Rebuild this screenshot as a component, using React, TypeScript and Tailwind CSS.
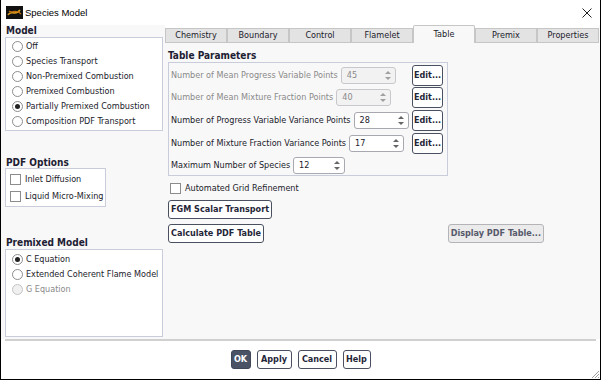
import React from 'react';

const font = "font-['DejaVu_Sans_Condensed','Liberation_Sans',sans-serif]";

const Radio = ({ label, checked, disabled }: { label: string; checked?: boolean; disabled?: boolean }) => (
  <div className="flex h-[15px] items-center">
    <span
      className={`ml-[6px] flex h-[11px] w-[11px] items-center justify-center rounded-full border ${
        disabled ? 'border-[#c4c4c4] bg-[#f0f0f0]' : 'border-[#8c8c8c] bg-white'
      }`}
    >
      {checked && <span className="h-[5px] w-[5px] rounded-full bg-[#222]" />}
    </span>
    <span className={`ml-[3px] ${disabled ? 'text-[#8a8a8a]' : 'text-[#1b1b2b]'}`}>{label}</span>
  </div>
);

const Check = ({ label }: { label: string }) => (
  <div className="flex h-[17px] items-center">
    <span className="ml-[4px] h-[11px] w-[11px] border border-[#8c8c8c] bg-white" />
    <span className="ml-[4px] text-[#1b1b2b]">{label}</span>
  </div>
);

const Spinner = ({ value, w, disabled }: { value: string; w: string; disabled?: boolean }) => (
  <div
    className={`ml-[3px] flex h-[17px] ${w} items-center justify-between rounded-[3px] border pl-[5px] pr-[4px] ${
      disabled ? 'border-[#c8c8cc] bg-[#f2f2f2] text-[#8a8a8a]' : 'border-[#a8a8b0] bg-white text-[#1b1b2b]'
    }`}
  >
    <span>{value}</span>
    <svg width="6" height="11" viewBox="0 0 6 11">
      <path d="M0 4 L3 1 L6 4 Z" fill={disabled ? '#a0a0a0' : '#666'} />
      <path d="M0 7 L3 10 L6 7 Z" fill={disabled ? '#a0a0a0' : '#666'} />
    </svg>
  </div>
);

const Btn = ({ label, cls = '' }: { label: string; cls?: string }) => (
  <div
    className={`flex h-[19px] items-center justify-center rounded-[3px] border border-[#4b5060] bg-white px-[2px] font-bold text-[#1f2638] ${cls}`}
  >
    {label}
  </div>
);

const params = [
  { label: 'Number of Mean Progress Variable Points', value: '45', disabled: true },
  { label: 'Number of Mean Mixture Fraction Points', value: '40', disabled: true },
  { label: 'Number of Progress Variable Variance Points', value: '28' },
  { label: 'Number of Mixture Fraction Variance Points', value: '17' },
];

const tabs = ['Chemistry', 'Boundary', 'Control', 'Flamelet', 'Table', 'Premix', 'Properties'];

const App = () => {
  return (
    <div className={`h-[381px] w-[602px] whitespace-nowrap bg-white text-[9px] leading-none ${font}`}>
      <div className="flex h-[380px] w-[601px] flex-col border-x border-b border-black bg-white">
        {/* title bar */}
        <div className="flex h-[25px] shrink-0 items-center">
          <svg className="ml-[5px]" width="17" height="13" viewBox="0 0 17 13">
            <rect width="17" height="13" fill="#111" />
            <path d="M2 9 C5 3, 9 11, 14 4" stroke="#e0a020" strokeWidth="1.6" fill="none" />
            <path d="M3 5 C6 8, 10 2, 15 8" stroke="#c07010" strokeWidth="1.2" fill="none" />
          </svg>
          <span className="ml-[2px] font-['Liberation_Sans',sans-serif] text-[9.5px] text-black">Species Model</span>
          <svg className="ml-auto mr-[8px]" width="10" height="10" viewBox="0 0 10 10">
            <path d="M0.5 0.5 L9.5 9.5 M9.5 0.5 L0.5 9.5" stroke="#222" strokeWidth="1" />
          </svg>
        </div>

        {/* main */}
        <div className="flex h-[314px] shrink-0 bg-[#f8f8f8]">
          {/* left panel */}
          <div className="flex w-[164px] flex-col pl-[4px]">
            <div className="flex h-[12px] items-center pl-[1px] text-[10px] font-bold text-[#1d2033]">Model</div>
            <div className="flex h-[94px] w-[158px] flex-col border border-[#c9ccdb] bg-white pt-[1px]">
              <Radio label="Off" />
              <Radio label="Species Transport" />
              <Radio label="Non-Premixed Combustion" />
              <Radio label="Premixed Combustion" />
              <Radio label="Partially Premixed Combustion" checked />
              <Radio label="Composition PDF Transport" />
            </div>
            <div className="mt-[26px] flex h-[11px] items-center pl-[1px] text-[10px] font-bold text-[#1d2033]">
              PDF Options
            </div>
            <div className="flex h-[39px] w-[101px] flex-col border border-[#c9ccdb] bg-white pt-[2px]">
              <Check label="Inlet Diffusion" />
              <Check label="Liquid Micro-Mixing" />
            </div>
            <div className="mt-[30px] flex h-[12px] items-center pl-[1px] text-[10px] font-bold text-[#1d2033]">
              Premixed Model
            </div>
            <div className="flex h-[88px] w-[158px] flex-col border border-[#c9ccdb] bg-white pt-[2px]">
              <Radio label="C Equation" checked />
              <Radio label="Extended Coherent Flame Model" />
              <Radio label="G Equation" disabled />
            </div>
          </div>

          {/* right panel */}
          <div className="flex w-[434px] flex-col">
            <div className="flex h-[18px] items-end bg-white">
              {tabs.map((t) =>
                t === 'Table' ? (
                  <div
                    key={t}
                    className="flex h-[18px] w-[62px] items-center justify-center rounded-t-[2px] border-x border-t border-[#c6c6c6] bg-[#f8f8f8] text-[#1b1b2b]"
                  >
                    {t}
                  </div>
                ) : (
                  <div
                    key={t}
                    className="flex h-[15px] w-[62px] items-center justify-center border border-[#c6c6c6] bg-[#e3e3e3] text-[#1b1b2b]"
                  >
                    {t}
                  </div>
                )
              )}
            </div>
            <div className="flex flex-1 flex-col pl-[3px] pt-[6px]">
              <div className="flex h-[13px] items-center text-[10px] font-bold text-[#1d2033]">Table Parameters</div>
              <div className="flex h-[114px] w-[280px] flex-col border border-[#c9ccdb] bg-[#f8f8f8] pt-[1px]">
                {params.map((p) => (
                  <div key={p.label} className="flex h-[23px] items-center pl-[2px] pr-[4px]">
                    <span className={p.disabled ? 'text-[#8a8a8a]' : 'text-[#1b1b2b]'}>{p.label}</span>
                    <Spinner value={p.value} w="w-[55px]" disabled={p.disabled} />
                    <Btn label="Edit..." cls="ml-auto h-[21px] w-[31px]" />
                  </div>
                ))}
                <div className="mt-[1px] flex h-[20px] items-center pl-[2px]">
                  <span className="text-[#1b1b2b]">Maximum Number of Species</span>
                  <Spinner value="12" w="w-[52px]" />
                </div>
              </div>
              <div className="mt-[6px] flex h-[13px] items-center">
                <span className="ml-[2px] h-[11px] w-[11px] border border-[#8c8c8c] bg-white" />
                <span className="ml-[4px] text-[#1b1b2b]">Automated Grid Refinement</span>
              </div>
              <div className="mt-[5px] flex">
                <Btn label="FGM Scalar Transport" />
              </div>
              <div className="mt-[5px] flex items-center">
                <Btn label="Calculate PDF Table" />
                <div className="ml-auto mr-[55px] flex h-[19px] items-center justify-center rounded-[3px] border border-[#b4b4b8] bg-[#ebebeb] px-[2px] font-bold text-[#56596a]">
                  Display PDF Table...
                </div>
              </div>
            </div>
          </div>
        </div>

        {/* separator */}
        <div className="mx-[4px] h-[2px] shrink-0 bg-[#d0d0d0]" />

        {/* bottom buttons */}
        <div className="relative flex flex-1 items-center justify-center gap-[6px] pb-[2px]">
          <div className="flex h-[19px] w-[20px] items-center justify-center rounded-[3px] border border-[#3e4658] bg-[#4a5365] font-bold text-white">
            OK
          </div>
          <Btn label="Apply" cls="w-[35px]" />
          <Btn label="Cancel" cls="w-[39px]" />
          <Btn label="Help" cls="w-[28px]" />
          <svg className="absolute bottom-0 right-0" width="10" height="10" viewBox="0 0 10 10">
            <path d="M9 2 L2 9 M9 5 L5 9 M9 8 L8 9" stroke="#a0a0a0" strokeWidth="1" />
          </svg>
        </div>
      </div>
    </div>
  );
};

export default App;
